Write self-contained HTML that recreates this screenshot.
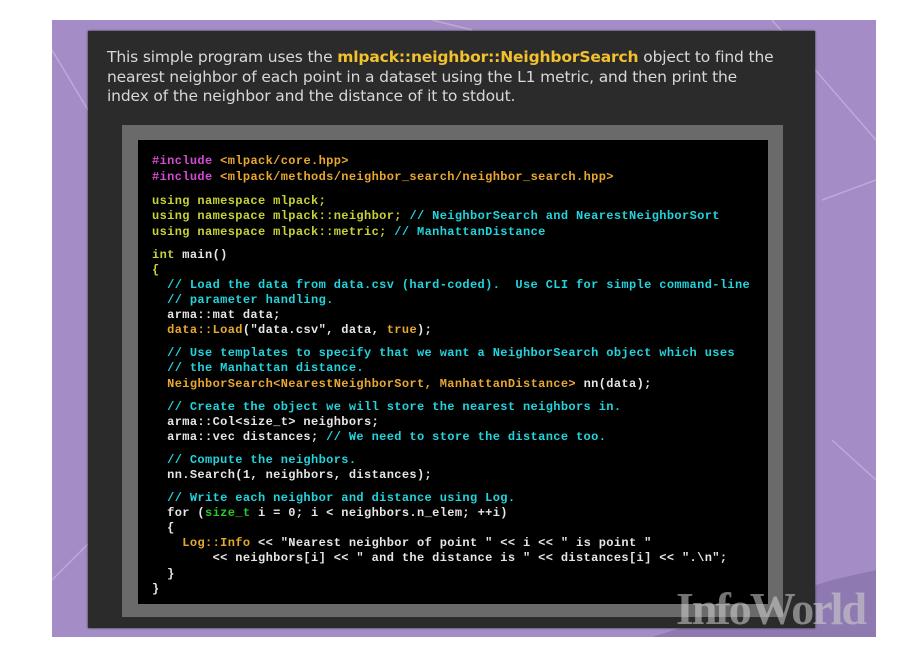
<!DOCTYPE html>
<html><head><meta charset="utf-8"><style>
html,body{margin:0;padding:0;background:#fff;width:906px;height:652px;overflow:hidden;position:relative}
.purple{position:absolute;left:52px;top:20px;width:824px;height:617px;background:#a48dc6;overflow:hidden}
.dark{position:absolute;left:88px;top:31px;width:727px;height:597px;background:#2b2b2b;box-shadow:0 0 2px #222}
.intro{position:absolute;left:107px;top:48px;width:672px;font:15.5px/19.5px "DejaVu Sans","Liberation Sans",sans-serif;color:#d8d8d8;letter-spacing:-0.15px}
.intro b{color:#f2c12e}
.frame{position:absolute;left:122px;top:125px;width:661px;height:492px;background:#6a6a6a}
.code{position:absolute;left:138px;top:140px;width:630px;height:464px;background:#000}
.l{position:absolute;left:152px;white-space:pre;font:bold 12px "Liberation Mono",monospace;letter-spacing:0.37px;color:#e6e6e6;line-height:15px;margin-top:1px}
.m{color:#d44ad4}.o{color:#e8a830}.y{color:#c8d238}.c{color:#22d4dc}.g{color:#28c828}
.wm{position:absolute;left:676px;top:582px;font:bold 46px "Liberation Serif",serif;color:rgba(210,210,210,0.55);letter-spacing:-2px}
</style></head><body>
<div class="purple">
<svg width="824" height="617" style="position:absolute;left:0;top:0" stroke="#bcaad8" stroke-width="1.5" fill="none">
<path d="M0 30 L60 130 M0 560 L40 520 M380 0 L420 10 M720 0 L824 120 M770 180 L824 160 M780 420 L824 460"/>
<path d="M780 560 L824 550 L824 617 L600 617 Z" fill="#8e7ab0" stroke="none"/>
</svg>
</div>
<div class="dark"></div>
<div class="intro">This simple program uses the <b>mlpack::neighbor::NeighborSearch</b> object to find the nearest neighbor of each point in a dataset using the L1 metric, and then print the index of the neighbor and the distance of it to stdout.</div>
<div class="frame"></div>
<div class="code"></div>
<div class="l" style="top:153px"><span class="m">#include</span> <span class="o">&lt;mlpack/core.hpp&gt;</span></div>
<div class="l" style="top:169px"><span class="m">#include</span> <span class="o">&lt;mlpack/methods/neighbor_search/neighbor_search.hpp&gt;</span></div>
<div class="l" style="top:193px"><span class="y">using namespace mlpack;</span></div>
<div class="l" style="top:208px"><span class="y">using namespace mlpack::neighbor;</span> <span class="c">// NeighborSearch and NearestNeighborSort</span></div>
<div class="l" style="top:224px"><span class="y">using namespace mlpack::metric;</span> <span class="c">// ManhattanDistance</span></div>
<div class="l" style="top:247px"><span class="y">int</span> main()</div>
<div class="l" style="top:262px"><span class="y">{</span></div>
<div class="l" style="top:277px"><span class="c">  // Load the data from data.csv (hard-coded).  Use CLI for simple command-line</span></div>
<div class="l" style="top:292px"><span class="c">  // parameter handling.</span></div>
<div class="l" style="top:307px">  arma::mat data;</div>
<div class="l" style="top:322px">  <span class="o">data::Load</span>("data.csv", data, <span class="o">true</span>);</div>
<div class="l" style="top:345px"><span class="c">  // Use templates to specify that we want a NeighborSearch object which uses</span></div>
<div class="l" style="top:360px"><span class="c">  // the Manhattan distance.</span></div>
<div class="l" style="top:376px">  <span class="o">NeighborSearch&lt;NearestNeighborSort, ManhattanDistance&gt;</span> nn(data);</div>
<div class="l" style="top:399px"><span class="c">  // Create the object we will store the nearest neighbors in.</span></div>
<div class="l" style="top:414px">  arma::Col&lt;size_t&gt; neighbors;</div>
<div class="l" style="top:429px">  arma::vec distances; <span class="c">// We need to store the distance too.</span></div>
<div class="l" style="top:452px"><span class="c">  // Compute the neighbors.</span></div>
<div class="l" style="top:467px">  nn.Search(1, neighbors, distances);</div>
<div class="l" style="top:490px"><span class="c">  // Write each neighbor and distance using Log.</span></div>
<div class="l" style="top:505px">  for (<span class="g">size_t</span> i = 0; i &lt; neighbors.n_elem; ++i)</div>
<div class="l" style="top:520px">  {</div>
<div class="l" style="top:535px">    <span class="o">Log::Info</span> &lt;&lt; "Nearest neighbor of point " &lt;&lt; i &lt;&lt; " is point "</div>
<div class="l" style="top:550px">        &lt;&lt; neighbors[i] &lt;&lt; " and the distance is " &lt;&lt; distances[i] &lt;&lt; ".\n";</div>
<div class="l" style="top:566px">  }</div>
<div class="l" style="top:581px">}</div>
<div class="wm">InfoWorld</div>
</body></html>
